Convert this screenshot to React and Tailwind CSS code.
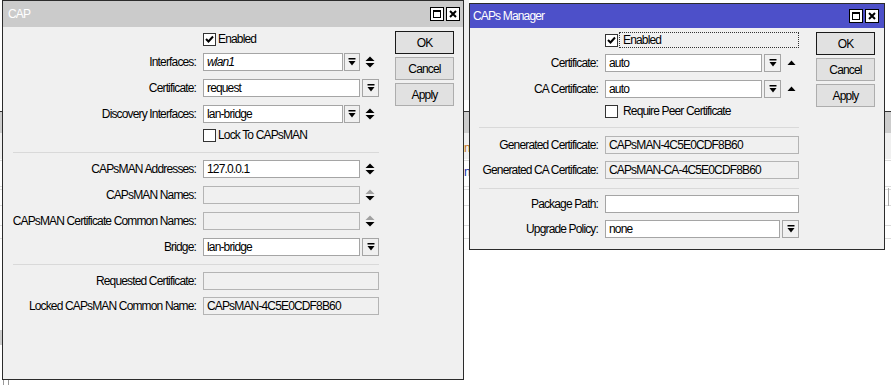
import React from "react";

function DropBtn({ w = 17 }) {
  return (
    <div
      className="h-[18px] border border-[#a5a5a5] bg-[#f0f0f0] flex items-center justify-center shrink-0"
      style={{ width: w }}
    >
      <svg width="8" height="8" viewBox="0 0 8 8">
        <rect x="0.5" y="0" width="7" height="1.5" fill="#000" />
        <path d="M0.5 3H7.5L4 7.5Z" fill="#000" />
      </svg>
    </div>
  );
}

function UpDown({ disabled }) {
  return (
    <svg width="10" height="12" viewBox="0 0 10 12" className="shrink-0">
      <path d="M5 0.5L9.5 5H0.5Z" fill={disabled ? "#a0a0a0" : "#000"} />
      <path d="M0.5 7H9.5L5 11.5Z" fill="#000" />
    </svg>
  );
}

function UpOnly() {
  return (
    <svg width="9" height="6" viewBox="0 0 9 6" className="shrink-0">
      <path d="M4.5 0.5L8.5 5H0.5Z" fill="#000" />
    </svg>
  );
}

function Box({ w, value, italic, ro }) {
  return (
    <div
      className={`h-[18px] border pl-[3px] flex items-center shrink-0 whitespace-nowrap overflow-hidden ${
        ro ? "bg-[#f0f0f0] border-[#b4b4b4]" : "bg-white border-[#a5a5a5]"
      } ${italic ? "italic" : ""}`}
      style={{ width: w }}
    >
      {value}
    </div>
  );
}

function Check({ checked }) {
  return (
    <div className="w-[13px] h-[13px] border border-[#333] bg-white flex items-center justify-center shrink-0">
      {checked && (
        <svg width="9" height="8" viewBox="0 0 9 8">
          <path d="M1 4L3.5 6.5L8 1.5" stroke="#000" strokeWidth="2" fill="none" />
        </svg>
      )}
    </div>
  );
}

function Row({ label, lw, mt, children }) {
  return (
    <div className="flex items-center h-[18px]" style={{ marginTop: mt }}>
      <div className="text-right pr-[7px] whitespace-nowrap shrink-0" style={{ width: lw }}>
        {label}
      </div>
      {children}
    </div>
  );
}

function TitleBtns() {
  return (
    <div className="flex gap-[2px]">
      <div className="w-[14px] h-[14px] border border-black bg-white flex items-center justify-center">
        <div className="w-[8px] h-[8px] border border-black border-t-2" />
      </div>
      <div className="w-[14px] h-[14px] border border-black bg-white flex items-center justify-center">
        <svg width="8" height="8" viewBox="0 0 8 8">
          <path d="M1 1L7 7M7 1L1 7" stroke="#000" strokeWidth="2" />
        </svg>
      </div>
    </div>
  );
}

function Btn({ children, def }) {
  return (
    <div
      className={`h-[23px] flex items-center justify-center bg-[#e1e1e1] border ${
        def ? "border-[#1a1a1a]" : "border-[#adadad]"
      }`}
    >
      {children}
    </div>
  );
}

function Buttons() {
  return (
    <div className="flex flex-col gap-[3px] w-[59px] pt-[4px]">
      <Btn def>OK</Btn>
      <Btn>Cancel</Btn>
      <Btn>Apply</Btn>
    </div>
  );
}

function Sep({ ml, w, mt }) {
  return <div className="h-px bg-[#d9d9d9]" style={{ marginLeft: ml, width: w, marginTop: mt }} />;
}

function CapWindow() {
  const lw = 200;
  return (
    <div className="absolute left-[2px] top-0 w-[462px] h-[380px] border border-[#2b2b2b] bg-[#f0f0f0]">
      <div className="h-[26px] bg-[#cbcbcb] flex items-center justify-between pl-[5px] pr-[3px] text-white">
        <span>CAP</span>
        <TitleBtns />
      </div>
      <div className="flex">
        <div className="w-[376px] flex flex-col pt-[4px]">
          <div className="flex items-center h-[16px]">
            <div className="shrink-0" style={{ width: lw }} />
            <Check checked />
            <span className="ml-[2px]">Enabled</span>
          </div>
          <Row label="Interfaces:" lw={lw} mt={6}>
            <Box w={140} value="wlan1" italic />
            <div className="ml-px"><DropBtn w={16} /></div>
            <div className="ml-[5px]"><UpDown /></div>
          </Row>
          <Row label="Certificate:" lw={lw} mt={8}>
            <Box w={157} value="request" />
            <div className="ml-[2px]"><DropBtn /></div>
          </Row>
          <Row label="Discovery Interfaces:" lw={lw} mt={8}>
            <Box w={140} value="lan-bridge" />
            <div className="ml-px"><DropBtn w={16} /></div>
            <div className="ml-[5px]"><UpDown /></div>
          </Row>
          <div className="flex items-center h-[16px] mt-[4px]">
            <div className="shrink-0" style={{ width: lw }} />
            <Check />
            <span className="ml-[2px]">Lock To CAPsMAN</span>
          </div>
          <Sep ml={10} w={366} mt={9} />
          <Row label="CAPsMAN Addresses:" lw={lw} mt={7}>
            <Box w={157} value="127.0.0.1" />
            <div className="ml-[5px]"><UpDown /></div>
          </Row>
          <Row label="CAPsMAN Names:" lw={lw} mt={8}>
            <Box w={157} value="" ro />
            <div className="ml-[5px]"><UpDown disabled /></div>
          </Row>
          <Row label="CAPsMAN Certificate Common Names:" lw={lw} mt={8}>
            <Box w={157} value="" ro />
            <div className="ml-[5px]"><UpDown disabled /></div>
          </Row>
          <Row label="Bridge:" lw={lw} mt={8}>
            <Box w={157} value="lan-bridge" />
            <div className="ml-[2px]"><DropBtn /></div>
          </Row>
          <Sep ml={10} w={366} mt={8} />
          <Row label="Requested Certificate:" lw={lw} mt={7}>
            <Box w={176} value="" ro />
          </Row>
          <Row label="Locked CAPsMAN Common Name:" lw={lw} mt={7}>
            <Box w={176} value="CAPsMAN-4C5E0CDF8B60" ro />
          </Row>
        </div>
        <div className="ml-[16px]">
          <Buttons />
        </div>
      </div>
    </div>
  );
}

function ManagerWindow() {
  const lw = 135;
  return (
    <div className="absolute left-[469px] top-[3px] w-[416px] h-[247px] border border-[#2b2b2b] bg-[#f0f0f0]">
      <div className="h-[24px] bg-[#4d50c9] flex items-center justify-between pl-[3px] pr-[5px] text-white">
        <span>CAPs Manager</span>
        <TitleBtns />
      </div>
      <div className="flex">
        <div className="w-[329px] flex flex-col pt-[4px]">
          <div className="flex items-center h-[16px]">
            <div className="shrink-0" style={{ width: lw }} />
            <Check checked />
            <span className="ml-px flex-1 h-[16px] border border-dotted border-[#333] pl-[3px] flex items-center">
              Enabled
            </span>
          </div>
          <Row label="Certificate:" lw={lw} mt={6}>
            <Box w={157} value="auto" />
            <div className="ml-[2px]"><DropBtn /></div>
            <div className="ml-[6px]"><UpOnly /></div>
          </Row>
          <Row label="CA Certificate:" lw={lw} mt={8}>
            <Box w={157} value="auto" />
            <div className="ml-[2px]"><DropBtn /></div>
            <div className="ml-[6px]"><UpOnly /></div>
          </Row>
          <div className="flex items-center h-[16px] mt-[5px]">
            <div className="shrink-0" style={{ width: lw }} />
            <Check />
            <span className="ml-[5px]">Require Peer Certificate</span>
          </div>
          <Sep ml={9} w={320} mt={8} />
          <Row label="Generated Certificate:" lw={lw} mt={8}>
            <Box w={194} value="CAPsMAN-4C5E0CDF8B60" ro />
          </Row>
          <Row label="Generated CA Certificate:" lw={lw} mt={7}>
            <Box w={194} value="CAPsMAN-CA-4C5E0CDF8B60" ro />
          </Row>
          <Sep ml={9} w={320} mt={9} />
          <Row label="Package Path:" lw={lw} mt={6}>
            <Box w={194} value="" />
          </Row>
          <Row label="Upgrade Policy:" lw={lw} mt={7}>
            <Box w={175} value="none" />
            <div className="ml-[2px]"><DropBtn /></div>
          </Row>
        </div>
        <div className="ml-[17px]">
          <Buttons />
        </div>
      </div>
    </div>
  );
}

function Backdrop() {
  const lines = [160, 186, 189, 205, 225, 238];
  return (
    <>
      <div className="absolute left-[464px] top-0 w-[5px] h-[100px] bg-[#f0f0f0]" />
      <div className="absolute left-0 right-0 top-[111px] h-[22px] border-t border-[#333] bg-[#cdcdcd]" />
      <div className="absolute left-0 right-0 top-[133px] h-[26px] bg-[#f0f0f0]" />
      {lines.map((y) => (
        <div key={y} className="absolute left-0 right-0 h-px bg-[#dcdcdc]" style={{ top: y }} />
      ))}
      <div className="absolute left-[888px] top-[188px] w-px h-[18px] bg-[#aaa]" />
      <div className="absolute left-[464px] top-[142px] text-[#c07020] overflow-hidden w-[5px]">n</div>
      <div className="absolute left-[464px] top-[166px] text-[#2030a0] overflow-hidden w-[5px]">n</div>
      <div className="absolute left-0 top-[330px] w-[2px] h-[15px] bg-[#cdcdcd]" />
      <div className="absolute left-[3px] top-[380px] w-px h-[5px] bg-[#999]" />
      <div className="absolute left-[8px] top-[380px] w-px h-[5px] bg-[#999]" />
    </>
  );
}

export default function App() {
  return (
    <div className="relative w-[891px] h-[385px] overflow-hidden bg-white text-black text-[12px] leading-none tracking-[-0.85px] font-['Liberation_Sans',Arial,sans-serif]">
      <Backdrop />
      <CapWindow />
      <ManagerWindow />
    </div>
  );
}
